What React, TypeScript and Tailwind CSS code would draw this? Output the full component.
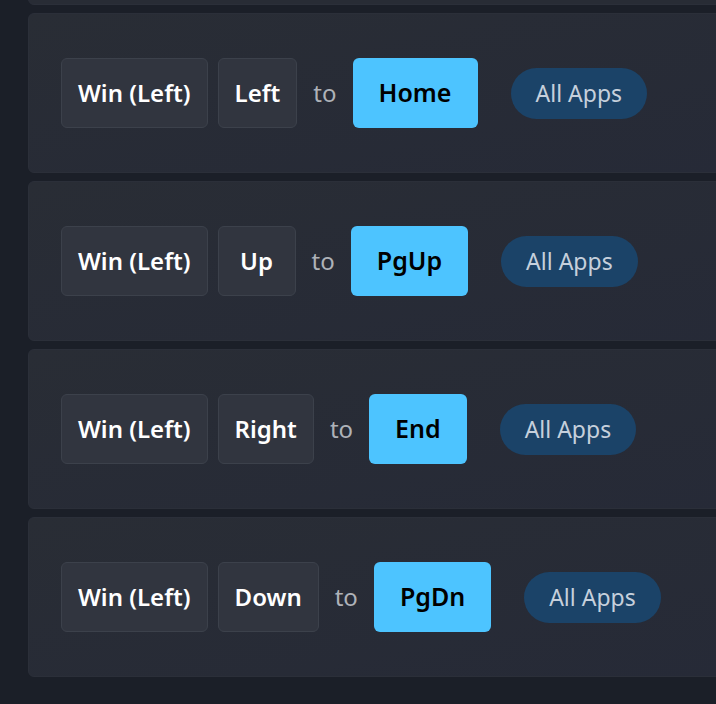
const ROWS = [
  { from: "Left", to: "Home" },
  { from: "Up", to: "PgUp" },
  { from: "Right", to: "End" },
  { from: "Down", to: "PgDn" },
];

const font = "font-['Noto_Sans','Open_Sans',sans-serif]";

function Key({ label }: { label: string }) {
  return (
    <span className="flex h-[70px] min-w-[78px] items-center justify-center rounded-md border border-[#3c414b] bg-[#31353f] px-4 text-[24px] font-semibold text-white">
      {label}
    </span>
  );
}

function RemapRow({ from, to }: { from: string; to: string }) {
  return (
    <div className="flex h-[160px] shrink-0 items-center rounded-md border border-[#2b2f39] bg-gradient-to-br from-[#292d35] to-[#262a37] pl-[32px]">
      <div className="flex items-center gap-[10px]">
        <Key label="Win (Left)" />
        <Key label={from} />
      </div>
      <span className="ml-[16px] text-[24px] text-[#aeb2b8]">to</span>
      <span className="ml-[16px] flex h-[70px] min-w-[94px] items-center justify-center rounded-md bg-[#4dc4ff] px-[26px] text-[25px] font-semibold text-black">
        {to}
      </span>
      <span className="ml-[33px] flex h-[51px] items-center rounded-full bg-[#1b4368] px-[25px] text-[23px] text-[#c6d0dc]">
        All Apps
      </span>
    </div>
  );
}

export default function App() {
  return (
    <div className={`h-[704px] w-[716px] overflow-hidden bg-[#1b1f28] pl-[28px] ${font}`}>
      <div className="-mt-[155px] flex w-[720px] flex-col gap-[8px]">
        <div className="h-[160px] shrink-0 rounded-md border border-[#2b2f39] bg-[#282c35]" />
        {ROWS.map((r) => (
          <RemapRow key={r.from} {...r} />
        ))}
      </div>
    </div>
  );
}
